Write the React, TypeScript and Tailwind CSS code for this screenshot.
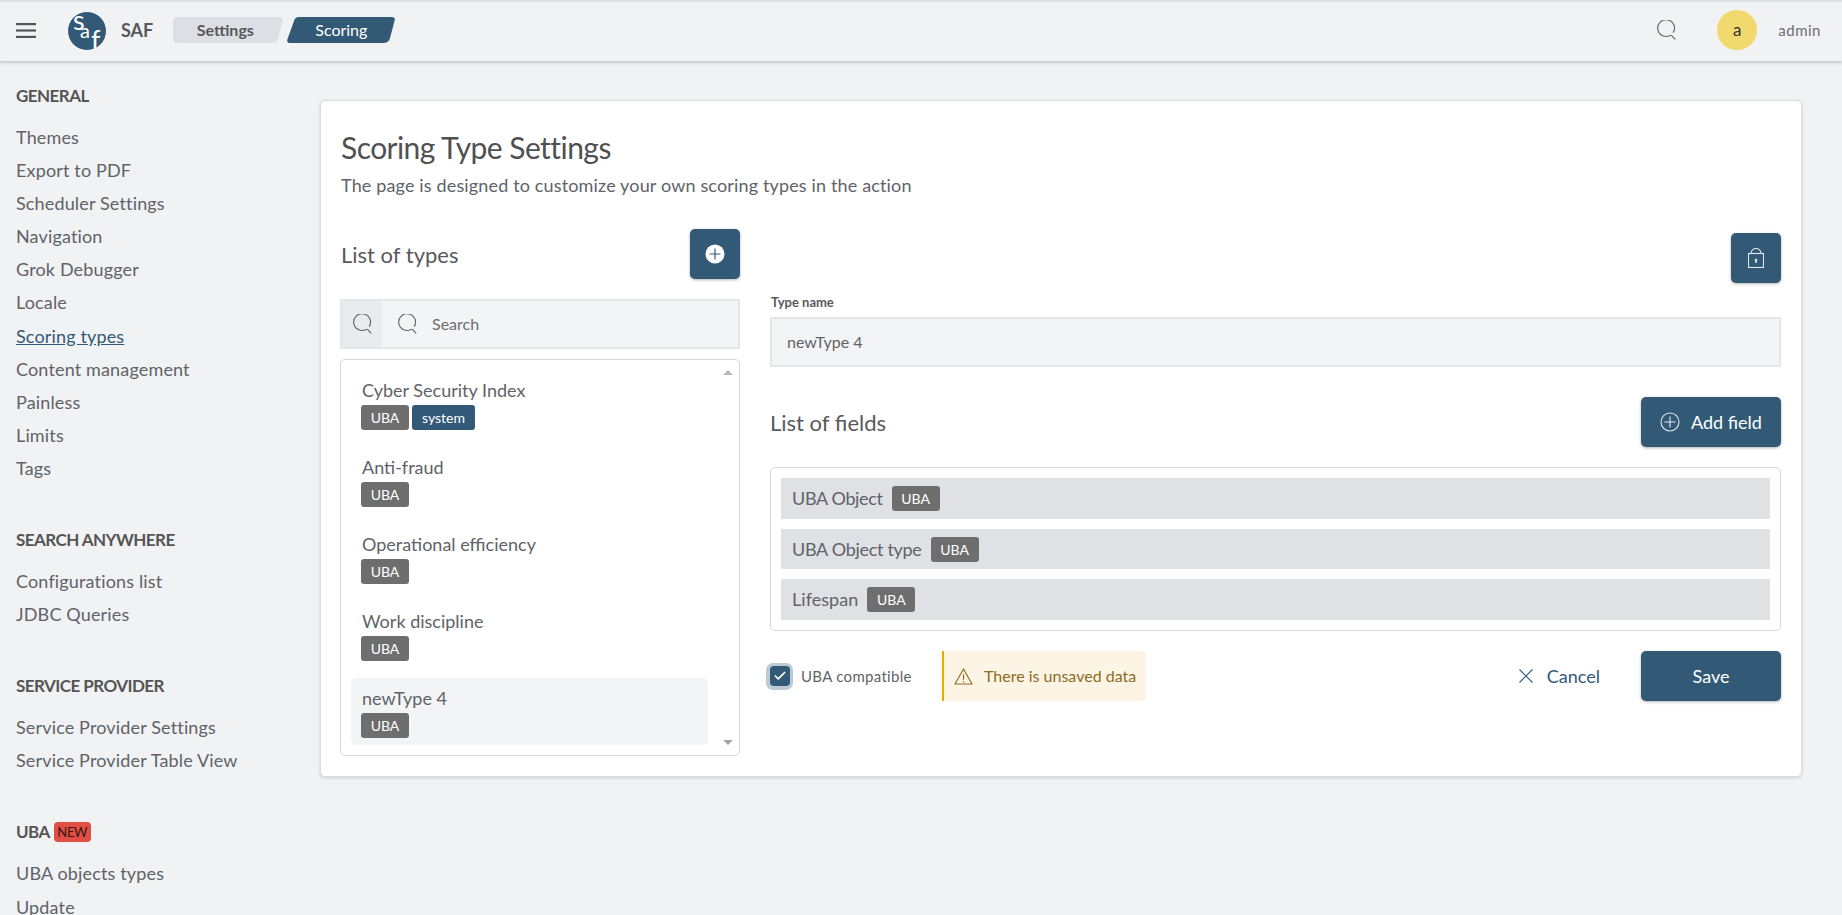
import { Check } from 'lucide-react';

const PRIMARY_SECTIONS = [
  {
    title: 'GENERAL',
    items: ['Themes', 'Export to PDF', 'Scheduler Settings', 'Navigation', 'Grok Debugger', 'Locale', 'Scoring types', 'Content management', 'Painless', 'Limits', 'Tags'],
  },
  { title: 'SEARCH ANYWHERE', items: ['Configurations list', 'JDBC Queries'] },
  { title: 'SERVICE PROVIDER', items: ['Service Provider Settings', 'Service Provider Table View'] },
  { title: 'UBA', items: ['UBA objects types', 'Update'], isNew: true },
];

const TYPES = [
  { name: 'Cyber Security Index', system: true },
  { name: 'Anti-fraud' },
  { name: 'Operational efficiency' },
  { name: 'Work discipline' },
  { name: 'newType 4', selected: true },
];

// Lifespan runs a bit wider than the others in the original font
const FIELDS = [
  { name: 'UBA Object', tracking: 'tracking-[-0.35px]' },
  { name: 'UBA Object type', tracking: 'tracking-[-0.3px]' },
  { name: 'Lifespan', tracking: 'tracking-[0.05px]' },
];

function Loupe({ className }: { className?: string }) {
  return (
    <svg viewBox="0 0 20 20" fill="none" stroke="currentColor" strokeWidth="1.1" className={className}>
      <path d="M14.6 15.2A8.4 8.4 0 1 1 17.2 12.6" />
      <path d="M15.2 15.2L19.2 19.4" />
    </svg>
  );
}

function PlusCircle({ className }: { className?: string }) {
  return (
    <svg viewBox="0 0 20 20" fill="none" stroke="currentColor" strokeWidth="1.1" className={className}>
      <circle cx="10" cy="10" r="9" />
      <path d="M10 4.5v11M4.5 10h11" />
    </svg>
  );
}

function Logo() {
  return (
    <svg viewBox="0 0 40 40" className="h-10 w-10 shrink-0 overflow-visible">
      <circle cx="20" cy="20" r="19.5" fill="#325a77" stroke="#fff" strokeWidth="1" />
      <text fill="#fff" fontFamily="'Lato', sans-serif">
        <tspan x="6" y="19" fontSize="27">s</tspan>
        <tspan x="13" y="27" fontSize="20">a</tspan>
        <tspan x="24" y="39" fontSize="27">f</tspan>
      </text>
    </svg>
  );
}

function Badge({ label, dark }: { label: string; dark?: boolean }) {
  return (
    <span className={`flex h-[25px] items-center justify-center rounded-[3px] text-[14px] text-white ${dark ? 'w-[63px] bg-[#325a77]' : 'w-[48px] bg-[#6e6e6e]'}`}>
      {label}
    </span>
  );
}

function Sidebar() {
  return (
    <aside className="w-[320px] shrink-0 pl-4 pt-[24px]">
      {PRIMARY_SECTIONS.map((section) => (
        <div key={section.title} className="mb-[44px]">
          <div className="mb-[14px] flex h-[22px] items-center gap-[4px] text-[17px] font-bold leading-[22px] tracking-[-0.55px] text-[#555]">
            {section.title}
            {section.isNew && (
              <span className="flex h-[20px] w-[37px] items-center justify-center rounded-[4px] bg-[#e04f43] text-[13px] font-normal tracking-[-0.3px] text-[#3a1512]">NEW</span>
            )}
          </div>
          {section.items.map((item) => (
            <div
              key={item}
              className={`h-[33.1px] text-[18px] leading-[33px] tracking-[0.15px] ${item === 'Scoring types' ? 'text-[#325a77] underline' : 'text-[#5f6368]'}`}
            >
              {item}
            </div>
          ))}
        </div>
      ))}
    </aside>
  );
}

function TriangleIcon() {
  return (
    <svg viewBox="0 0 20 18" fill="none" stroke="currentColor" strokeWidth="1.2" className="h-[17px] w-[19px] shrink-0">
      <path d="M10 1L19 17H1Z" strokeLinejoin="round" />
      <path d="M10 6.5v6M10 13.8v1.4" />
    </svg>
  );
}

export default function App() {
  return (
    <div className="flex h-screen w-full flex-col overflow-hidden bg-[#f1f2f4] font-['Lato','Noto_Sans',sans-serif] text-[#58595b]">
      <header className="relative z-10 flex h-[61px] shrink-0 items-center border-t-2 border-[#dcdee2] bg-[#f1f2f4] pb-[3px] shadow-[0_2px_3px_rgba(60,70,85,0.25)]">
        <svg viewBox="0 0 20 15" fill="#555" className="ml-4 h-[15px] w-5">
          <rect y="0" width="20" height="2.2" />
          <rect y="6.4" width="20" height="2.2" />
          <rect y="12.8" width="20" height="2.2" />
        </svg>
        <div className="ml-[31px] mt-[2px]">
          <Logo />
        </div>
        <span className="ml-[14px] text-[18px] font-bold text-[#58595b]">SAF</span>
        <div className="ml-5 flex items-center gap-[4px]">
          <div className="relative flex h-[26px] w-[110px] items-center justify-center pr-[6px] text-[16px] font-bold text-[#58595b]">
            <svg viewBox="0 0 110 26" className="absolute inset-0 h-full w-full" fill="#dcdfe4">
              <path d="M5 0H105Q110.5 0 109.5 4L105 22Q104 26 100 26H5Q0 26 0 21V5Q0 0 5 0Z" />
            </svg>
            <span className="relative">Settings</span>
          </div>
          <div className="relative flex h-[26px] w-[108px] items-center justify-center text-[16px] text-white">
            <svg viewBox="0 0 108 26" className="absolute inset-0 h-full w-full" fill="#325a77">
              <path d="M12 0H104Q109 0 107.5 4L103 21Q102 26 96 26H4Q-1 26 0.5 22L7 4Q8 0 12 0Z" />
            </svg>
            <span className="relative">Scoring</span>
          </div>
        </div>
        <div className="ml-auto flex items-center">
          <Loupe className="h-5 w-5 text-[#5f6368]" />
          <div className="ml-[41px] flex h-10 w-10 items-center justify-center rounded-full bg-[#f1d96e] text-[17px] text-[#333]">a</div>
          <span className="ml-[21px] mr-[21px] text-[15px] tracking-[0.5px] text-[#6b6e72]">admin</span>
        </div>
      </header>

      <div className="flex min-h-0 flex-1">
        <Sidebar />
        <main className="pt-[39px]">
          <div className="flex h-[677px] w-[1482px] flex-col rounded-[5px] border border-[#dcdee2] bg-white pl-[19px] pr-5 pt-[21px] shadow-[0_1px_3px_rgba(60,70,85,0.2)]">
            <h1 className="h-[50px] pl-px text-[30px] leading-[50px] tracking-[-0.55px] text-[#4f5052]">Scoring Type Settings</h1>
            <p className="h-[26px] pl-px text-[18px] leading-[26px] tracking-[0.15px] text-[#5f6368]">The page is designed to customize your own scoring types in the action</p>

            <div className="mt-[31px] flex gap-[30px]">
              {/* types column */}
              <section className="w-[400px] shrink-0">
                <div className="flex h-[50px] items-center justify-between">
                  <h2 className="pl-px text-[22px] text-[#58595b]">List of types</h2>
                  <button className="flex h-[50px] w-[50px] items-center justify-center rounded-[5px] bg-[#325a77] shadow-[0_1px_3px_rgba(0,0,0,0.3)]">
                    <svg viewBox="0 0 20 20" className="h-5 w-5">
                      <circle cx="10" cy="10" r="9.5" fill="#fff" />
                      <path d="M10 4.5v11M4.5 10h11" stroke="#325a77" strokeWidth="1.2" />
                    </svg>
                  </button>
                </div>
                <div className="mt-[20px] flex h-[50px] items-center border-2 border-[#e4e6e9] bg-[#f3f4f6]">
                  <div className="flex h-full w-[40px] items-center justify-center bg-[#e9ebee]">
                    <Loupe className="h-5 w-5 text-[#5f6368]" />
                  </div>
                  <Loupe className="ml-[15px] h-5 w-5 text-[#5f6368]" />
                  <span className="ml-[15px] text-[16px] text-[#6b6e72]">Search</span>
                </div>
                <div className="relative mt-[10px] h-[397px] rounded-[5px] border border-[#d5d8dc] pl-[10px] pt-[10px]">
                  <div className="absolute right-[6px] top-[10px] h-0 w-0 border-x-[5px] border-b-[5px] border-x-transparent border-b-[#b5b8bc]" />
                  <div className="absolute bottom-[10px] right-[6px] h-0 w-0 border-x-[5px] border-t-[5px] border-x-transparent border-t-[#a5a8ac]" />
                  <ul className="w-[357px]">
                    {TYPES.map((t) => (
                      <li key={t.name} className={`mb-[10px] h-[67px] rounded-[5px] pl-[11px] pr-[10px] pt-[7px] ${t.selected ? 'bg-[#f3f4f6]' : ''}`}>
                        <div className="h-[26px] text-[18px] leading-[26px] text-[#5f6368]">{t.name}</div>
                        <div className="-ml-px mt-[2px] flex gap-[3px]">
                          <Badge label="UBA" />
                          {t.system && <Badge label="system" dark />}
                        </div>
                      </li>
                    ))}
                  </ul>
                </div>
              </section>

              {/* form column */}
              <section className="min-w-0 flex-1">
                <div className="mt-[4px] flex h-[50px] justify-end">
                  <button className="flex h-[50px] w-[50px] items-center justify-center rounded-[5px] bg-[#325a77] shadow-[0_1px_3px_rgba(0,0,0,0.3)]">
                    <svg viewBox="0 0 16 20" fill="none" stroke="#e4e8ec" strokeWidth="1.1" className="h-5 w-4">
                      <rect x="0.5" y="5.5" width="15" height="14" />
                      <path d="M3 5.5V5a5 4.5 0 0 1 10 0v.5" />
                      <circle cx="8" cy="12" r="1.3" fill="#e4e8ec" stroke="none" />
                      <rect x="7.2" y="12" width="1.6" height="3" fill="#e4e8ec" stroke="none" />
                    </svg>
                  </button>
                </div>
                <label className="mt-[10px] block h-[24px] pl-px text-[13px] font-bold leading-[18px] text-[#58595b]">Type name</label>
                <div className="flex h-[50px] items-center border-2 border-[#e4e6e9] bg-[#f3f4f6] pl-[15px] text-[16px] text-[#5f6368]">newType 4</div>
                <div className="mt-[30px] flex h-[50px] items-center justify-between">
                  <h2 className="text-[22px] text-[#58595b]">List of fields</h2>
                  <button className="flex h-[50px] w-[140px] items-center justify-center gap-[11px] rounded-[5px] bg-[#325a77] text-[18px] text-white shadow-[0_1px_3px_rgba(0,0,0,0.3)]">
                    <PlusCircle className="h-5 w-5 text-[#e4e8ec]" />
                    Add field
                  </button>
                </div>
                <div className="mt-[20px] flex h-[164px] flex-col gap-[10px] rounded-[5px] border border-[#d5d8dc] p-[10px]">
                  {FIELDS.map((f) => (
                    <div key={f.name} className={`flex h-[41px] items-center gap-[9px] bg-[#dfe1e4] pl-[11px] text-[18px] text-[#5f6368] ${f.tracking}`}>
                      {f.name}
                      <span className="flex h-[25px] w-[48px] items-center justify-center rounded-[3px] bg-[#6e6e6e] text-[14px] tracking-normal text-white">UBA</span>
                    </div>
                  ))}
                </div>
                <div className="mt-[20px] flex h-[50px] items-center">
                  <div className="-ml-[4px] flex h-[27px] w-[27px] items-center justify-center rounded-[7px] bg-[#bccad5]">
                    <div className="flex h-5 w-5 items-center justify-center rounded-[4px] bg-[#325a77]">
                      <Check className="h-[14px] w-[14px] text-white" strokeWidth={3} />
                    </div>
                  </div>
                  <span className="ml-2 w-[141px] text-[15px] tracking-[0.3px] text-[#5f6368]">UBA compatible</span>
                  <div className="flex h-[50px] w-[204px] items-center border-l-2 border-[#f5a800] bg-[#fcf4e4] pl-[10px] text-[#8f6b1e]">
                    <TriangleIcon />
                    <span className="ml-[11px] text-[16px]">There is unsaved data</span>
                  </div>
                  <div className="ml-auto flex items-center">
                    <svg viewBox="0 0 14 14" fill="none" stroke="#325a77" strokeWidth="1.1" className="h-[14px] w-[14px]">
                      <path d="M0.5 0.5L13.5 13.5M13.5 0.5L0.5 13.5" />
                    </svg>
                    <span className="ml-[14px] text-[18px] text-[#325a77]">Cancel</span>
                    <button className="ml-[41px] h-[50px] w-[140px] rounded-[5px] bg-[#325a77] text-[18px] text-white shadow-[0_1px_3px_rgba(0,0,0,0.3)]">Save</button>
                  </div>
                </div>
              </section>
            </div>
          </div>
        </main>
      </div>
    </div>
  );
}
